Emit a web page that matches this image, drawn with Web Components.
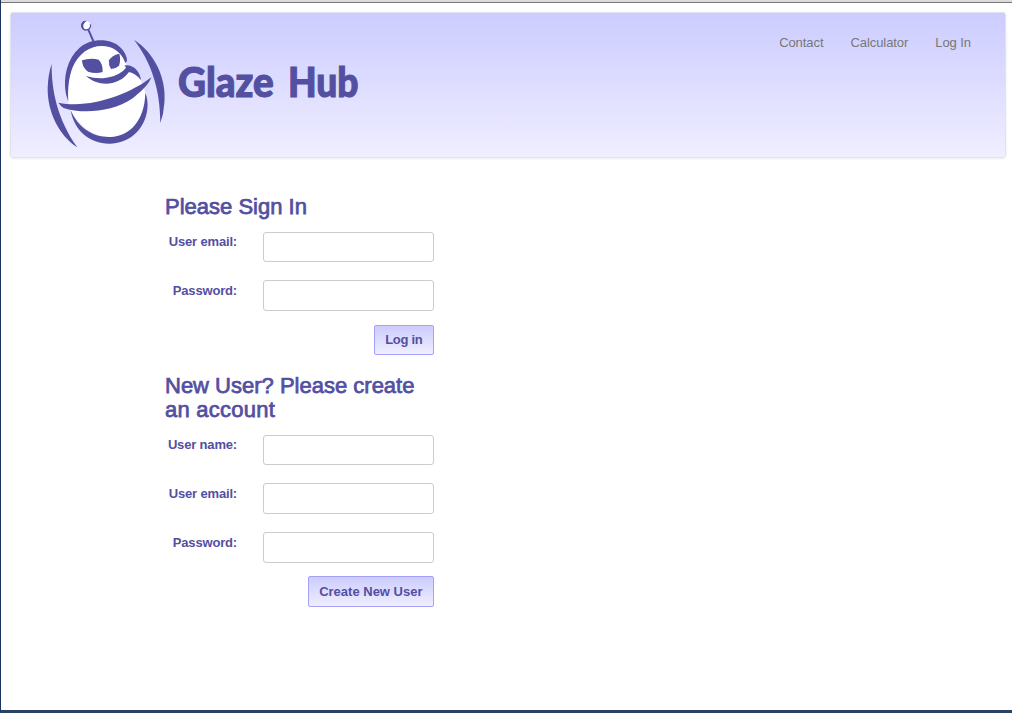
<!DOCTYPE html>
<html lang="en">
<head>
<meta charset="utf-8">
<title>Glaze Hub</title>
<style>
html,body{margin:0;height:100%;background:#fff}
body{font-family:"Liberation Sans",Arial,sans-serif;font-size:13px;color:#534fa1;overflow:hidden}
</style>
</head>
<body>
<hub-page></hub-page>
<script>
const define = (name, html, setup) => customElements.define(name, class extends HTMLElement {
  constructor() {
    super();
    this.attachShadow({mode: 'open'}).innerHTML = html;
  }
  connectedCallback() { if (setup) setup(this, this.shadowRoot); }
});

define('hub-logo', `<style>:host{display:block;width:130px;height:140px;flex:none}svg{display:block}</style>
<svg width="130" height="140" viewBox="0 0 390 420" fill="#534fa1" aria-hidden="true">
<path fill="#fff" d="M86 275C80 225 85 170 110 130C138 94 190 84 228 104C250 118 260 135 259 155L275 170Q292 182 304 202L316 236C324 290 312 325 283 348C250 377 190 376 150 352Q108 325 92 288Z"/>
<path d="M85 263L78 241C68 190 82 133 118 102C155 70 215 73 243 102Q261 121 261 141L256 147C249 126 232 106 208 99C162 87 119 111 98 160C86 190 83 225 85 263Z"/>
<path d="M92 289C115 342 160 371 211 369C270 366 314 320 316 236Q325 259 322 286C314 352 262 390 207 389C150 388 103 352 92 289Z"/>
<path d="M55 266C150 286 270 240 334 190C325 215 300 235 278 253C215 296 125 300 71 282Q62 276 55 266Z"/>
<path d="M282 77C344 117 381 194 373 268Q371 300 361 327C361 225 333 143 282 77Z"/>
<path d="M35 150C34 225 51 315 112 400C55 363 22 292 23 222Q24 182 35 150Z"/>
<path d="M138 186Q166 195 195 192Q227 188 249 171L258 161L254 154C279 150 301 172 303 198Q287 178 267 174C234 218 175 219 138 186Z"/>
<path d="M126 139Q151 131 176 137Q189 150 188 174Q167 181 144 173C132 165 127 153 126 139Z"/>
<path d="M238 119Q215 124 207 139Q205 152 213 165Q228 164 237 155Q243 139 238 119Z"/>
<path d="M145 47L163 88" fill="none" stroke="#534fa1" stroke-width="6"/>
<circle cx="139" cy="34" r="12.5" fill="#fff"/>
<path fill="none" stroke="#534fa1" stroke-width="4" d="M151 31A13 13 0 1 1 133 23"/>
<path d="M140 20Q125 19 123 34Q124 49 138 50Q128 43 130 32Q133 24 140 20Z"/>
</svg>`);

define('hub-brand', `<style>
:host{display:flex;align-items:flex-start}
.name{display:flex;margin:41px 0 0 8px;font:900 41px/54px Lato,"Open Sans",sans-serif;height:54px;-webkit-text-stroke:1.1px #534fa1}
.name span{display:block;transform-origin:0 50%;white-space:pre}
.a{width:109.5px}.a span{transform:scaleX(.942)}
.b span{transform:scaleX(.905)}
</style><hub-logo></hub-logo><div class="name"><div class="a"><span>Glaze </span></div><div class="b"><span>Hub</span></div></div>`);

define('hub-link', `<style>:host{display:block;color:#777}a{color:inherit;text-decoration:none;display:block;white-space:nowrap}</style><a><slot></slot></a>`);

define('hub-header', `<style>
:host{box-sizing:border-box;display:flex;justify-content:space-between;height:146px;border:1px solid #e2e2ef;border-radius:3px;padding:1px 34px 0 29px;background:linear-gradient(#ccf,#f0eeff);box-shadow:0 1px 3px rgba(0,0,0,.08)}
nav{display:flex;gap:27px;margin-top:21px;line-height:16px;height:16px;letter-spacing:-.07px}
</style><hub-brand></hub-brand><nav><hub-link>Contact</hub-link><hub-link>Calculator</hub-link><hub-link>Log In</hub-link></nav>`);

define('hub-field', `<style>
:host{display:flex;justify-content:space-between;height:48.75px}
label{width:72px;padding-top:.5px;text-align:right;font-weight:700;line-height:20px;white-space:nowrap;letter-spacing:-.17px}
input{box-sizing:border-box;width:171px;height:30.5px;border:1px solid #ccc;border-radius:3px;background:#fff;margin:0;padding:4px 6px;font:inherit;outline:0}
</style><label for="i"><slot></slot></label><input id="i">`, (el, root) => {
  root.querySelector('input').type = el.getAttribute('type') || 'text';
});

define('hub-button', `<style>
:host{display:flex;justify-content:flex-end;margin-top:-4.5px}
button{box-sizing:border-box;height:30.3px;padding:.6px 10.5px 0;border:1px solid #a5a0fa;border-radius:2px;background:linear-gradient(#ccf,#f0eeff);font:700 13px/20px "Liberation Sans",Arial,sans-serif;color:#534fa1;white-space:nowrap}
:host([compact]){margin-top:-4.2px}
:host([compact]) button{height:30px;letter-spacing:-.28px}
</style><button type="button"><slot></slot></button>`);

define('hub-form', `<style>
:host{display:block;width:269px}
h2{margin:0 0 12.2px;padding-top:.4px;font-weight:400;font-size:22px;line-height:24px;-webkit-text-stroke:.75px #534fa1}
</style><h2><slot name="title"></slot></h2><slot></slot>`);

define('hub-page', `<style>
:host{box-sizing:border-box;display:flex;flex-direction:column;height:713px;width:1012px;border-left:1px solid #1d3260;border-bottom:3px solid #2c4064;background:#fff}
.chrome{height:2px;flex:none;background:#dcdcdc;border-bottom:1px solid #777}
hub-header{margin:9px 6px 0 9px;flex:none}
main{display:flex;flex-direction:column;gap:19.2px;margin:37px 0 0 164px}
.wide{letter-spacing:.25px}
</style><div class="chrome"></div><hub-header></hub-header><main>
<hub-form><span slot="title">Please Sign In</span><hub-field>User email:</hub-field><hub-field type="password">Password:</hub-field><hub-button compact>Log in</hub-button></hub-form>
<hub-form><span slot="title">New User? Please create <span class="wide">an account</span></span><hub-field>User name:</hub-field><hub-field>User email:</hub-field><hub-field type="password">Password:</hub-field><hub-button>Create New User</hub-button></hub-form>
</main>`);
</script>
</body>
</html>
